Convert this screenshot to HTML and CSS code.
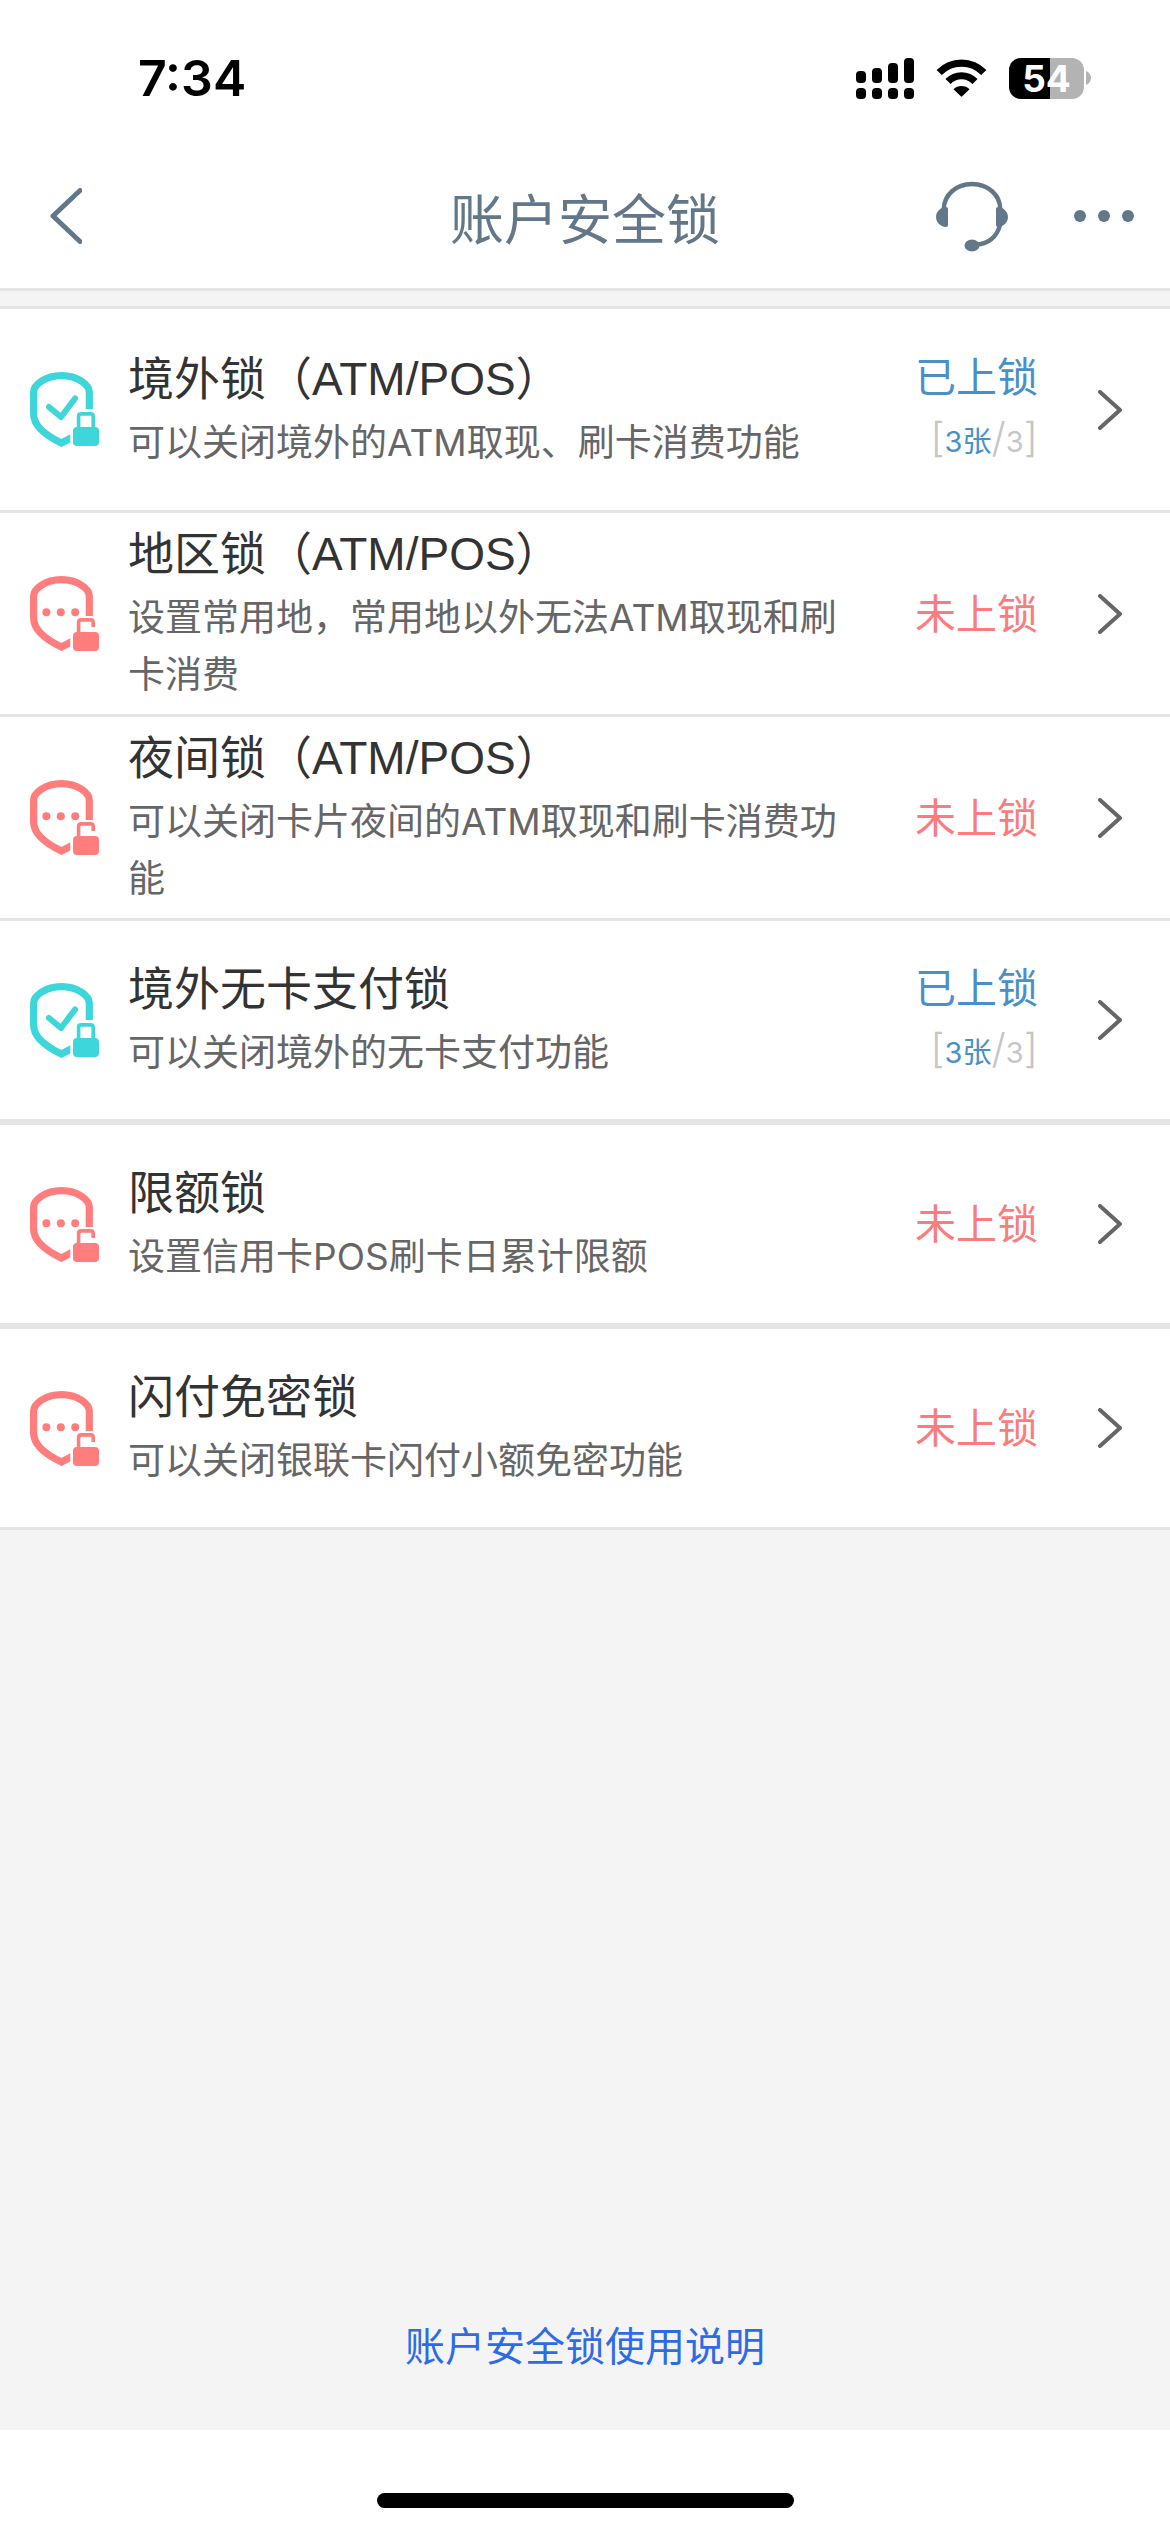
FILE: index.html
```html
<!DOCTYPE html>
<html lang="zh-CN">
<head>
    <meta charset="UTF-8">
    <meta name="viewport" content="width=device-width, initial-scale=1.0">
    <title>账户安全锁</title>
    <link rel="stylesheet" href="styles.css">
</head>
<body>
    <!-- 图标 -->
    <svg class="sprite" aria-hidden="true">
        <symbol id="icon-locked" viewBox="0 0 69 75">
            <path d="M59.3 37V20C59.3 13 48 3.6 31.5 3.6S3.6 13 3.6 20V42C3.6 56 21 66 31.5 71L43 65" fill="none" stroke="currentColor" stroke-width="7.2"/>
            <path d="M19 35L31 45L45 26.5" fill="none" stroke="currentColor" stroke-width="6" stroke-linecap="round" stroke-linejoin="round"/>
            <rect x="40.3" y="54" width="29" height="21" fill="#fff"/>
            <path d="M48.6 57V44.5q0-2.6 2.6-2.6h9.4q2.6 0 2.6 2.6V57" fill="none" stroke="currentColor" stroke-width="3.6"/>
            <rect x="43" y="55" width="26" height="19" rx="4" fill="currentColor"/>
        </symbol>
        <symbol id="icon-unlocked" viewBox="0 0 69 75">
            <path d="M59.3 40V20C59.3 13 48 3.6 31.5 3.6S3.6 13 3.6 20V42C3.6 56 21 66 31.5 71L43 65" fill="none" stroke="currentColor" stroke-width="7.2"/>
            <circle cx="16.4" cy="36.3" r="4" fill="currentColor"/>
            <circle cx="30.8" cy="36.3" r="4" fill="currentColor"/>
            <circle cx="45.2" cy="36.3" r="4" fill="currentColor"/>
            <rect x="40.3" y="54" width="29" height="21" fill="#fff"/>
            <path d="M48.6 57V46.5q0-2.6 2.6-2.6h9.4q2.6 0 2.6 2.6V51" fill="none" stroke="currentColor" stroke-width="3.6"/>
            <rect x="43" y="56" width="26" height="19" rx="4" fill="currentColor"/>
        </symbol>
        <symbol id="icon-arrow" viewBox="0 0 24 40">
            <path d="M2 2L22 20L2 38" fill="none" stroke="currentColor" stroke-width="4" stroke-linecap="round" stroke-linejoin="round"/>
        </symbol>
    </svg>

    <header class="header">
        <div class="status-bar">
            <span class="time">7:34</span>
            <div class="status-icons">
                <svg class="signal" viewBox="0 0 58 41">
                    <rect x="0" y="13" width="10" height="12" rx="4"/>
                    <rect x="16" y="10" width="10" height="15" rx="4"/>
                    <rect x="32" y="5" width="10" height="20" rx="4"/>
                    <rect x="48" y="0" width="10" height="25" rx="4"/>
                    <rect x="0" y="30" width="10" height="11" rx="4"/>
                    <rect x="16" y="30" width="10" height="11" rx="4"/>
                    <rect x="32" y="30" width="10" height="11" rx="4"/>
                    <rect x="48" y="30" width="10" height="11" rx="4"/>
                </svg>
                <svg class="wifi" viewBox="0 0 51 38">
                    <path d="M3.2 13.5A31 31 0 0 1 47.8 13.5" fill="none" stroke="#000" stroke-width="7.2"/>
                    <path d="M12 22.5A18.5 18.5 0 0 1 39 22.5" fill="none" stroke="#000" stroke-width="7"/>
                    <path d="M17.5 30.2A11.5 11.5 0 0 1 33.5 30.2L26.2 37.3Q25.5 38 24.8 37.3Z"/>
                </svg>
                <div class="battery">
                    <span class="battery-level">54</span>
                    <svg class="battery-cap" viewBox="0 0 5 14"><path d="M0 0C3 1 5 4 5 7S3 13 0 14Z" fill="#b3b3b3"/></svg>
                </div>
            </div>
        </div>
        <nav class="nav">
            <button class="nav-button back" aria-label="返回">
                <svg viewBox="0 0 32 56" width="32" height="56"><path d="M30 2.5L3 28L30 53.5" fill="none" stroke="currentColor" stroke-width="5" stroke-linecap="round" stroke-linejoin="round"/></svg>
            </button>
            <h1 class="nav-title">账户安全锁</h1>
            <div class="nav-actions">
                <button class="nav-button" aria-label="客服">
                    <svg viewBox="0 0 72 71" width="72" height="71">
                        <path d="M7.8 28C8 14 20 3 36 3S64.2 14 64.2 28M64 44C61 56 52 63 41 63.5" fill="none" stroke="currentColor" stroke-width="4.4"/>
                        <path d="M10 26a2 2 0 0 1 2 2V44a2 2 0 0 1-2 2C5 46 0 41.5 0 36S5 26 10 26ZM62 26a2 2 0 0 0-2 2V44a2 2 0 0 0 2 2C67 46 72 41.5 72 36S67 26 62 26Z" fill="currentColor"/>
                        <ellipse cx="36" cy="64.5" rx="7.5" ry="6" fill="currentColor"/>
                    </svg>
                </button>
                <button class="nav-button" aria-label="更多">
                    <svg viewBox="0 0 60 12" width="60" height="12" fill="currentColor"><circle cx="6" cy="6" r="6"/><circle cx="30" cy="6" r="6"/><circle cx="54" cy="6" r="6"/></svg>
                </button>
            </div>
        </nav>
    </header>

    <main class="content">
        <ul class="lock-list">
            <li>
                <a class="lock-item" href="#">
                    <svg class="lock-icon locked"><use href="#icon-locked"/></svg>
                    <div class="lock-text">
                        <h2>境外锁（ATM/POS）</h2>
                        <p>可以关闭境外的ATM取现、刷卡消费功能</p>
                    </div>
                    <div class="lock-status on">
                        <span>已上锁</span>
                        <span class="count">[<b>3张</b>/<i>3</i>]</span>
                    </div>
                    <svg class="arrow"><use href="#icon-arrow"/></svg>
                </a>
            </li>
            <li>
                <a class="lock-item" href="#">
                    <svg class="lock-icon unlocked"><use href="#icon-unlocked"/></svg>
                    <div class="lock-text">
                        <h2>地区锁（ATM/POS）</h2>
                        <p>设置常用地，常用地以外无法ATM取现和刷卡消费</p>
                    </div>
                    <div class="lock-status off"><span>未上锁</span></div>
                    <svg class="arrow"><use href="#icon-arrow"/></svg>
                </a>
            </li>
            <li>
                <a class="lock-item" href="#">
                    <svg class="lock-icon unlocked"><use href="#icon-unlocked"/></svg>
                    <div class="lock-text">
                        <h2>夜间锁（ATM/POS）</h2>
                        <p>可以关闭卡片夜间的ATM取现和刷卡消费功能</p>
                    </div>
                    <div class="lock-status off"><span>未上锁</span></div>
                    <svg class="arrow"><use href="#icon-arrow"/></svg>
                </a>
            </li>
            <li>
                <a class="lock-item group-end" href="#">
                    <svg class="lock-icon locked"><use href="#icon-locked"/></svg>
                    <div class="lock-text">
                        <h2>境外无卡支付锁</h2>
                        <p>可以关闭境外的无卡支付功能</p>
                    </div>
                    <div class="lock-status on">
                        <span>已上锁</span>
                        <span class="count">[<b>3张</b>/<i>3</i>]</span>
                    </div>
                    <svg class="arrow"><use href="#icon-arrow"/></svg>
                </a>
            </li>
            <li>
                <a class="lock-item group-end" href="#">
                    <svg class="lock-icon unlocked"><use href="#icon-unlocked"/></svg>
                    <div class="lock-text">
                        <h2>限额锁</h2>
                        <p>设置信用卡POS刷卡日累计限额</p>
                    </div>
                    <div class="lock-status off"><span>未上锁</span></div>
                    <svg class="arrow"><use href="#icon-arrow"/></svg>
                </a>
            </li>
            <li>
                <a class="lock-item" href="#">
                    <svg class="lock-icon unlocked"><use href="#icon-unlocked"/></svg>
                    <div class="lock-text">
                        <h2>闪付免密锁</h2>
                        <p>可以关闭银联卡闪付小额免密功能</p>
                    </div>
                    <div class="lock-status off"><span>未上锁</span></div>
                    <svg class="arrow"><use href="#icon-arrow"/></svg>
                </a>
            </li>
        </ul>
        <a class="help-link" href="#">账户安全锁使用说明</a>
    </main>

    <footer class="home-area">
        <div class="home-bar"></div>
    </footer>
</body>
</html>
```

FILE: styles.css
```css
/* 通用样式 */
* {
    box-sizing: border-box;
}

body {
    margin: 0;
    min-height: 100vh;
    display: flex;
    flex-direction: column;
    background: #fff;
    color: #333;
    font-family: Inter, "Noto Sans CJK SC", sans-serif;
}

h1, h2, p, ul {
    margin: 0;
    padding: 0;
    font-weight: 400;
}

ul {
    list-style: none;
}

a {
    color: inherit;
    text-decoration: none;
}

.sprite {
    display: none;
}

/* 状态栏 */
.header {
    border-bottom: 3px solid #e4e4e4;
}

.status-bar {
    display: flex;
    align-items: center;
    justify-content: space-between;
    height: 156px;
    padding: 0 79px 0 138px;
}

.time {
    color: #000;
    font-size: 50px;
    font-weight: 600;
}

.status-icons {
    display: flex;
    align-items: center;
    gap: 22px;
}

.signal {
    width: 58px;
    height: 41px;
}

.wifi {
    width: 51px;
    height: 38px;
}

.battery {
    display: flex;
    align-items: center;
    gap: 2px;
}

.battery-level {
    width: 75px;
    border-radius: 12px;
    background: linear-gradient(to right, #000 55%, #b3b3b3 55%);
    color: #fff;
    font-size: 37px;
    font-weight: 700;
    line-height: 41px;
    text-align: center;
}

.battery-cap {
    width: 5px;
    height: 14px;
}

/* 导航栏 */
.nav {
    display: grid;
    grid-template-columns: 1fr auto 1fr;
    align-items: center;
    height: 132px;
    padding: 0 36px 12px;
    color: #627889;
}

.nav-title {
    padding-top: 10px;
    font-size: 54px;
    line-height: 80px;
}

.nav-button {
    display: flex;
    padding: 0;
    border: none;
    background: none;
    color: inherit;
    cursor: pointer;
}

.back {
    padding-left: 14px;
}

.nav-actions {
    display: flex;
    align-items: center;
    justify-content: flex-end;
    gap: 66px;
}

/* 列表 */
.content {
    flex: 1;
    display: flex;
    flex-direction: column;
    padding-top: 15px;
    background: #f4f4f4;
}

.lock-list {
    border-top: 3px solid #e4e4e4;
    background: #fff;
}

.lock-item {
    display: flex;
    align-items: center;
    min-height: 204px;
    padding: 0 48px 0 30px;
    border-bottom: 3px solid #e4e4e4;
}

.group-end {
    border-bottom-width: 6px;
}

.lock-list li:last-child .lock-item {
    min-height: 201px;
}

.lock-icon {
    flex: none;
    width: 69px;
    height: 75px;
    margin-right: 29px;
}

.locked {
    color: #3dd6da;
}

.unlocked {
    color: #ff7d7d;
}

.lock-text {
    flex: 1;
    margin-right: 48px;
    padding-bottom: 4px;
}

.lock-text h2 {
    font-family: "Liberation Sans", "Noto Sans CJK SC", sans-serif;
    font-size: 46px;
    line-height: 69px;
}

.lock-text p {
    color: #666;
    font-size: 37px;
    line-height: 57px;
}

.lock-status {
    display: flex;
    flex-direction: column;
    align-items: flex-end;
    font-size: 41px;
    line-height: 60px;
}

.on {
    color: #4a90c8;
}

.off {
    color: #fa7d7d;
}

.count {
    color: #c6c6c6;
    font-size: 41px;
    font-weight: 300;
}

.count b,
.count i {
    font-size: 29px;
    font-style: normal;
    font-weight: 400;
}

.count b {
    color: #4a90c8;
}

.arrow {
    flex: none;
    width: 24px;
    height: 40px;
    margin-left: 60px;
    color: #666;
}

.help-link {
    margin: auto auto 48px;
    color: #2f6be4;
    font-size: 40px;
    line-height: 70px;
}

/* 底部横条 */
.home-area {
    display: flex;
    justify-content: center;
    align-items: flex-end;
    height: 102px;
    padding-bottom: 24px;
}

.home-bar {
    width: 417px;
    height: 15px;
    border-radius: 8px;
    background: #000;
}
```
